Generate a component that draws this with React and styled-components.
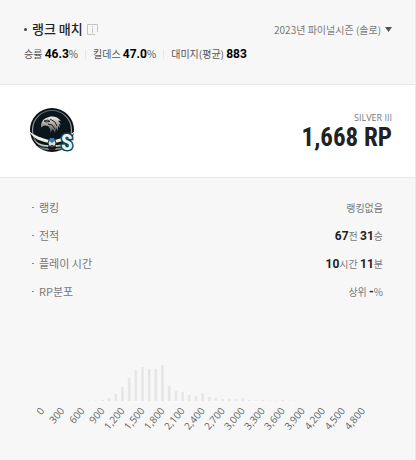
import React from 'react';
import styled, { createGlobalStyle } from 'styled-components';

const rows = [
    { label: '랭킹', parts: [['', '랭킹없음']] },
    { label: '전적', parts: [['67', '전'], ['31', '승']] },
    { label: '플레이 시간', parts: [['10', '시간'], ['11', '분']] },
    { label: 'RP분포', parts: [['', '상위'], ['-', '%']] },
];

// one value for each 100 RP
const bars = [
    0, 0, 0, 0, 0, 0, 0, 0.3, 0.5, 1, 3, 7, 14, 23, 31, 34, 32, 32, 36, 15, 10, 9, 6, 5, 8,
    4, 3, 2, 2, 2, 3, 1, 1, 1, 0.5, 0.4, 1, 0.4, 0.3, 0, 0, 0, 0, 0, 0, 0, 0, 0, 0,
];
const step = 6.68;

const Emblem = () => (
    <svg width="50" height="50" viewBox="0 0 50 50" role="img" aria-label="Silver">
        <defs>
            <linearGradient id="steel" x1="0" y1="0" x2="0" y2="1">
                <stop offset="0" stopColor="#f4f1e9" />
                <stop offset="0.5" stopColor="#a39d95" />
                <stop offset="1" stopColor="#484c50" />
            </linearGradient>
            <linearGradient id="rim" x1="0" y1="0" x2="0" y2="1">
                <stop offset="0" stopColor="#5a686f" />
                <stop offset="0.5" stopColor="#98a2a6" />
                <stop offset="1" stopColor="#27333a" />
            </linearGradient>
        </defs>
        <circle cx="23" cy="24" r="22" fill="#0b1116" />
        <circle cx="23" cy="24" r="19.500" fill="none" stroke="url(#rim)" strokeWidth="1.200" />
        <circle cx="23" cy="24" r="18" fill="#0a151c" />
        <g transform="translate(0 2)">
            <path d="M13 14c1-3 4-4 7-5 4-1 8 0 10 2l2 2-3-.5 3 4-2-.6 1 4-2-2 0 5-2-3-1 5-2-4-3 4c1-3 0-5-2-7l-4-.5-3 2c0-2 0-4 1-5.400z" fill="url(#steel)" />
            <path d="M15 13l4-1 2 1.500-4 .5zM19 16l4 1 3 4M21 11l5 3 2 4" fill="none" stroke="#172028" strokeWidth="1" />
            <path d="M0 23c6 5 13 7 20 9l1 3c-8-1-17-4-21-12z" fill="#f0ede7" />
            <path d="M46 23c-6 5-13 7-20 9l-1 3c8-1 17-4 21-12z" fill="#f0ede7" />
            <path d="M4 31c4 4 9 6 16 6l-1 2c-6 0-12-3-15-8z" fill="#c3c4c1" />
            <path d="M42 31c-4 4-9 6-16 6l1 2c6 0 12-3 15-8z" fill="#c3c4c1" />
            <path d="M9 38c3 2 6 2 10 2l1 2c-4 0-8-1-11-4z" fill="#7e878a" />
            <path d="M37 38c-3 2-6 2-10 2l-1 2c4 0 8-1 11-4z" fill="#7e878a" />
            <circle cx="23" cy="35" r="4" fill="#e4dfd5" stroke="#26343e" strokeWidth="1" />
            <path d="M21 30h4l1 3-3 2-3-2z" fill="#3b78b3" />
            <path d="M21 37h4l-2 2z" fill="#4b4037" />
        </g>
        <EmblemLetter x="38" y="44" textAnchor="middle">S</EmblemLetter>
    </svg>
);

const Chart = () => (
    <ChartSvg viewBox="0 0 351 90" role="img" aria-label="RP분포">
        {bars.map((value, i) => (
            <rect key={i} x={9 + i * step} y={47 - value} width="2.600" height={value} fill="#e6e6e6" />
        ))}
        {bars.map((value, i) =>
            i % 3 === 0 ? (
                <text key={i} textAnchor="end" transform={`translate(${13 + i * step} 57) rotate(-50)`}>
                    {(i * 100).toLocaleString('en-US')}
                </text>
            ) : null
        )}
    </ChartSvg>
);

const App = () => {
    return (
        <Card>
            <GlobalStyle />
            <Header>
                <TitleRow>
                    <Title>랭크 매치</Title>
                    <InfoButton type="button" aria-label="info">
                        <svg width="11" height="11" viewBox="0 0 11 11" fill="none" stroke="#c4c4c4">
                            <path d="M8 10.500H.5V.5h10V8M5.500 2v1.500M5.500 4.500V9" />
                        </svg>
                    </InfoButton>
                    <Season>
                        <select aria-label="season">
                            <option>2023년 파이널시즌 (솔로)</option>
                        </select>
                        <svg width="7" height="5" viewBox="0 0 7 5">
                            <path d="M0 0h7L3.500 5z" fill="#555" />
                        </svg>
                    </Season>
                </TitleRow>
                <Stats>
                    <li>승률 <Num>46.3</Num>%</li>
                    <li>킬데스 <Num>47.0</Num>%</li>
                    <li>대미지(평균) <Num>883</Num></li>
                </Stats>
            </Header>
            <Tier>
                <Emblem />
                <Rating>
                    <span>SILVER III</span>
                    <strong>1,668 RP</strong>
                </Rating>
            </Tier>
            <Details>
                {rows.map((row) => (
                    <Row key={row.label}>
                        <dt>{row.label}</dt>
                        <dd>
                            {row.parts.map(([num, unit], i) => (
                                <React.Fragment key={unit}>
                                    {i > 0 && ' '}
                                    {num && <Num>{num}</Num>}
                                    {unit}
                                </React.Fragment>
                            ))}
                        </dd>
                    </Row>
                ))}
            </Details>
            <Chart />
        </Card>
    );
};

export default App;

const GlobalStyle = createGlobalStyle`
    *{
        box-sizing: border-box;
        margin: 0;
        padding: 0;
    }
    body{
        background-color: #f7f7f7;
        font-family: "Noto Sans CJK KR", sans-serif;
        font-size: 10px;
        color: #777;
    }
`

const Card = styled.main`
    min-height: 100vh;
    border-right: 1px solid #e8e8e8;
`

const Header = styled.header`
    padding: 20px 23px 22px 24px;
    border-bottom: 1px solid #e8e8e8;
`

const TitleRow = styled.div`
    display: flex;
    align-items: center;
    height: 18px;
`

const Title = styled.h2`
    display: flex;
    align-items: center;
    gap: 5px;
    font-size: 13px;
    font-weight: 500;
    line-height: 18px;
    color: #222;

    &::before{
        content: "";
        width: 3px;
        height: 3px;
        border-radius: 50%;
        background-color: #444;
    }
`

const InfoButton = styled.button`
    display: flex;
    margin-left: 4px;
    border: 0;
    background: none;
`

const Season = styled.label`
    display: flex;
    align-items: center;
    gap: 3px;
    margin-left: auto;

    select{
        appearance: none;
        border: 0;
        background: none;
        font: inherit;
        color: #777;
    }
`

const Stats = styled.ul`
    display: flex;
    margin-top: 8px;
    list-style: none;
    line-height: 16px;
    color: #555;

    li + li{
        margin-left: 7px;
        padding-left: 8px;
        background: linear-gradient(#e8e8e8, #e8e8e8) left center / 1px 9px no-repeat;
    }

    b{
        color: #000;
    }
`

const Num = styled.b`
    font-family: Roboto, sans-serif;
    font-size: 12px;
    font-weight: 700;
    color: #222;
`

const Tier = styled.section`
    display: flex;
    align-items: center;
    justify-content: space-between;
    padding: 21px 23px 21px 29px;
    border-bottom: 1px solid #e8e8e8;
    background-color: #fff;
`

const Rating = styled.p`
    display: flex;
    flex-direction: column;
    align-items: flex-end;
    padding-top: 4px;

    span{
        font-family: "Open Sans", sans-serif;
        font-size: 9px;
        line-height: 10px;
    }

    strong{
        font-family: "Roboto Condensed", Roboto, sans-serif;
        font-size: 25px;
        line-height: 30px;
        color: #222;
    }
`

const EmblemLetter = styled.text`
    font-family: "Roboto Condensed", Roboto, sans-serif;
    font-size: 22px;
    font-weight: 700;
    fill: #eef3ef;
    stroke: #0f474f;
    stroke-width: 3px;
    paint-order: stroke;
`

const Details = styled.dl`
    padding: 15px 32px 0;
`

const Row = styled.div`
    display: flex;
    align-items: center;
    justify-content: space-between;
    height: 28px;

    dt{
        display: flex;
        align-items: center;
        gap: 5px;
        font-size: 11px;
    }

    dt::before{
        content: "";
        width: 2px;
        height: 1px;
        background-color: #888;
    }
`

const ChartSvg = styled.svg`
    display: block;
    width: 100%;
    padding: 0 32px;
    margin-top: 49px;

    text{
        font-family: "Open Sans", sans-serif;
        font-size: 10px;
        fill: #666;
    }
`
